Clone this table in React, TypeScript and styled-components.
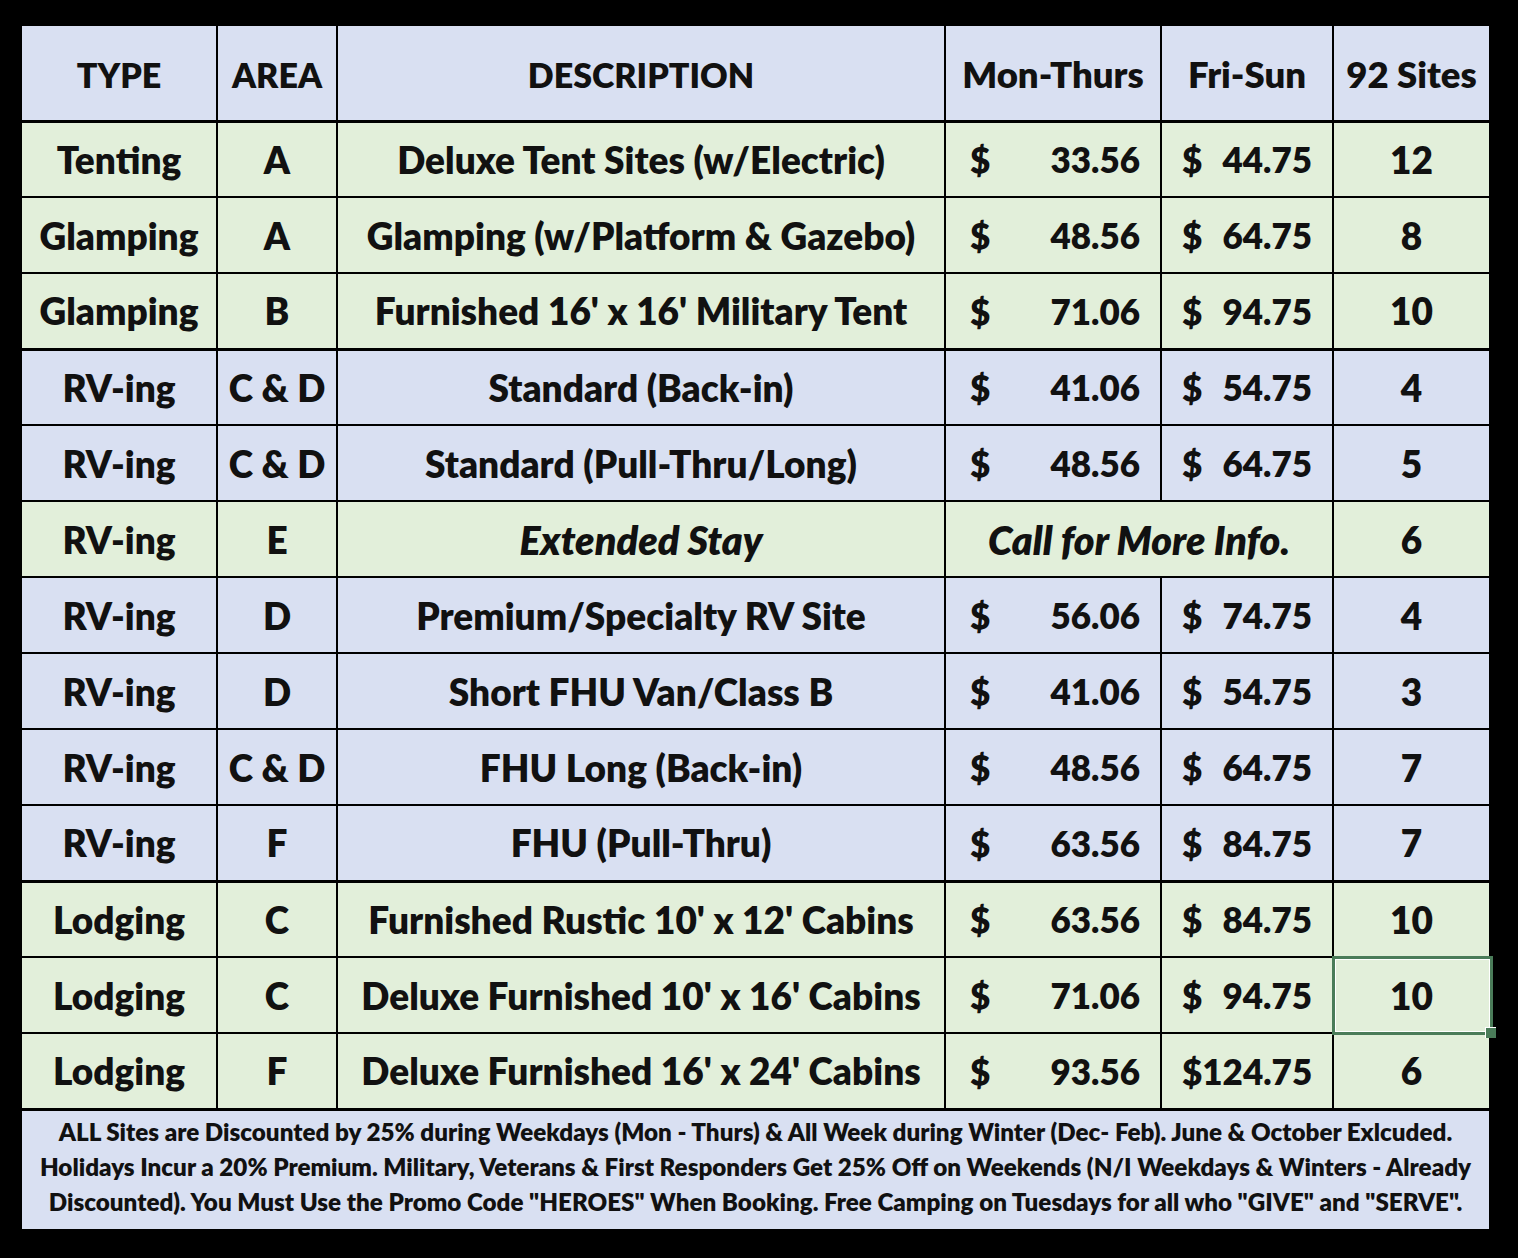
import styled, { createGlobalStyle } from 'styled-components';

const GlobalStyle = createGlobalStyle`
  html, body {
    margin: 0;
    padding: 0;
    background: #000;
  }
  body {
    font-family: Lato, "Open Sans", sans-serif;
  }
`;

const LAVENDER = '#d9e0f2';
const GREEN = '#e2efda';

type Row = {
  type: string;
  area: string;
  desc: string;
  mon?: string;
  fri?: string;
  sites: string;
  tone: 'green' | 'blue';
  thick?: boolean;
  italic?: boolean;
  selected?: boolean;
};

const rows: Row[] = [
  { type: 'Tenting', area: 'A', desc: 'Deluxe Tent Sites (w/Electric)', mon: '33.56', fri: '44.75', sites: '12', tone: 'green' },
  { type: 'Glamping', area: 'A', desc: 'Glamping (w/Platform & Gazebo)', mon: '48.56', fri: '64.75', sites: '8', tone: 'green' },
  { type: 'Glamping', area: 'B', desc: "Furnished 16' x 16' Military Tent", mon: '71.06', fri: '94.75', sites: '10', tone: 'green', thick: true },
  { type: 'RV-ing', area: 'C & D', desc: 'Standard (Back-in)', mon: '41.06', fri: '54.75', sites: '4', tone: 'blue' },
  { type: 'RV-ing', area: 'C & D', desc: 'Standard (Pull-Thru/Long)', mon: '48.56', fri: '64.75', sites: '5', tone: 'blue' },
  { type: 'RV-ing', area: 'E', desc: 'Extended Stay', sites: '6', tone: 'green', italic: true },
  { type: 'RV-ing', area: 'D', desc: 'Premium/Specialty RV Site', mon: '56.06', fri: '74.75', sites: '4', tone: 'blue' },
  { type: 'RV-ing', area: 'D', desc: 'Short FHU Van/Class B', mon: '41.06', fri: '54.75', sites: '3', tone: 'blue' },
  { type: 'RV-ing', area: 'C & D', desc: 'FHU Long (Back-in)', mon: '48.56', fri: '64.75', sites: '7', tone: 'blue' },
  { type: 'RV-ing', area: 'F', desc: 'FHU (Pull-Thru)', mon: '63.56', fri: '84.75', sites: '7', tone: 'blue', thick: true },
  { type: 'Lodging', area: 'C', desc: "Furnished Rustic 10' x 12' Cabins", mon: '63.56', fri: '84.75', sites: '10', tone: 'green' },
  { type: 'Lodging', area: 'C', desc: "Deluxe Furnished 10' x 16' Cabins", mon: '71.06', fri: '94.75', sites: '10', tone: 'green', selected: true },
  { type: 'Lodging', area: 'F', desc: "Deluxe Furnished 16' x 24' Cabins", mon: '93.56', fri: '124.75', sites: '6', tone: 'green', thick: true },
];

const widths = [195, 120, 608, 216, 172, 156];

function App() {
  return (
    <>
      <GlobalStyle />
      <Page>
        <Sheet>
          <colgroup>
            {widths.map((w, i) => (
              <col key={i} style={{ width: w }} />
            ))}
          </colgroup>
          <thead>
            <HeadRow>
              <HeadCell>TYPE</HeadCell>
              <HeadCell>AREA</HeadCell>
              <HeadCell>DESCRIPTION</HeadCell>
              <HeadCell $wide>Mon-Thurs</HeadCell>
              <HeadCell $wide>Fri-Sun</HeadCell>
              <HeadCell $wide>92 Sites</HeadCell>
            </HeadRow>
          </thead>
          <tbody>
            {rows.map((r, idx) => (
              <BodyRow key={idx} $tone={r.tone} $thick={r.thick}>
                <Cell>{r.type}</Cell>
                <Cell>{r.area}</Cell>
                <Cell $italic={r.italic}>{r.desc}</Cell>
                {r.mon ? (
                  <>
                    <Cell>
                      <Money $left={24} $right={20}>
                        <span>$</span>
                        <span>{r.mon}</span>
                      </Money>
                    </Cell>
                    <Cell>
                      <Money $left={20} $right={20}>
                        <span>$</span>
                        <span>{r.fri}</span>
                      </Money>
                    </Cell>
                  </>
                ) : (
                  <Cell colSpan={2} $italic>
                    Call for More Info.
                  </Cell>
                )}
                <Cell $selected={r.selected}>{r.sites}</Cell>
              </BodyRow>
            ))}
            <FootRow>
              <FootCell colSpan={6}>
                ALL Sites are Discounted by 25% during Weekdays (Mon - Thurs) &amp; All Week during Winter (Dec- Feb). June &amp; October Exlcuded.
                <br />
                Holidays Incur a 20% Premium. Military, Veterans &amp; First Responders Get 25% Off on Weekends (N/I Weekdays &amp; Winters - Already
                <br />
                Discounted). You Must Use the Promo Code "HEROES" When Booking. Free Camping on Tuesdays for all who "GIVE" and "SERVE".
              </FootCell>
            </FootRow>
          </tbody>
        </Sheet>
      </Page>
    </>
  );
}

export default App;

const Page = styled.div`
  width: 1518px;
  height: 1258px;
  box-sizing: border-box;
  padding: 26px 0 0 22px;
  background: #000;
`;

const Sheet = styled.table`
  width: 1467px;
  table-layout: fixed;
  border-collapse: collapse;
  color: #111;
  font-weight: 800;
`;

const HeadRow = styled.tr`
  height: 95px;
  background: ${LAVENDER};
  border-bottom: 3px solid #000;
`;

const HeadCell = styled.th<{ $wide?: boolean }>`
  padding: 3px 0 0;
  font-size: ${(p) => (p.$wide ? '36.5px' : '34px')};
  font-weight: 800;
  text-align: center;
  border-right: 2px solid #000;
  white-space: nowrap;

  &:last-child {
    border-right: none;
  }
`;

const BodyRow = styled.tr<{ $tone: 'green' | 'blue'; $thick?: boolean }>`
  height: 76px;
  background: ${(p) => (p.$tone === 'green' ? GREEN : LAVENDER)};
  border-bottom: ${(p) => (p.$thick ? '3px' : '2px')} solid #000;
`;

const Cell = styled.td<{ $italic?: boolean; $selected?: boolean }>`
  position: relative;
  padding: 0;
  font-size: ${(p) => (p.$italic ? '39.5px' : '37px')};
  text-align: center;
  white-space: nowrap;
  font-style: ${(p) => (p.$italic ? 'italic' : 'normal')};
  border-right: 2px solid #000;

  &:last-child {
    border-right: none;
  }

  ${(p) =>
    p.$selected &&
    `
    &::after {
      content: '';
      position: absolute;
      left: -2px;
      top: -2px;
      right: -4px;
      bottom: -3px;
      border: 3px solid #4a7c59;
      box-shadow: inset 0 0 0 1px #fff;
      pointer-events: none;
    }
    &::before {
      content: '';
      position: absolute;
      right: -7px;
      bottom: -6px;
      width: 10px;
      height: 10px;
      background: #4a7c59;
      border-left: 1px solid #fff;
      border-top: 1px solid #fff;
      z-index: 2;
    }
  `}
`;

const Money = styled.div<{ $left: number; $right: number }>`
  display: flex;
  justify-content: space-between;
  font-size: 35px;
  padding: 0 ${(p) => p.$right}px 0 ${(p) => p.$left}px;
`;

const FootRow = styled.tr`
  background: ${LAVENDER};
`;

const FootCell = styled.td`
  height: 112px;
  padding: 0 0 6px;
  font-size: 24.2px;
  line-height: 35px;
  text-align: center;
  white-space: nowrap;
`;
